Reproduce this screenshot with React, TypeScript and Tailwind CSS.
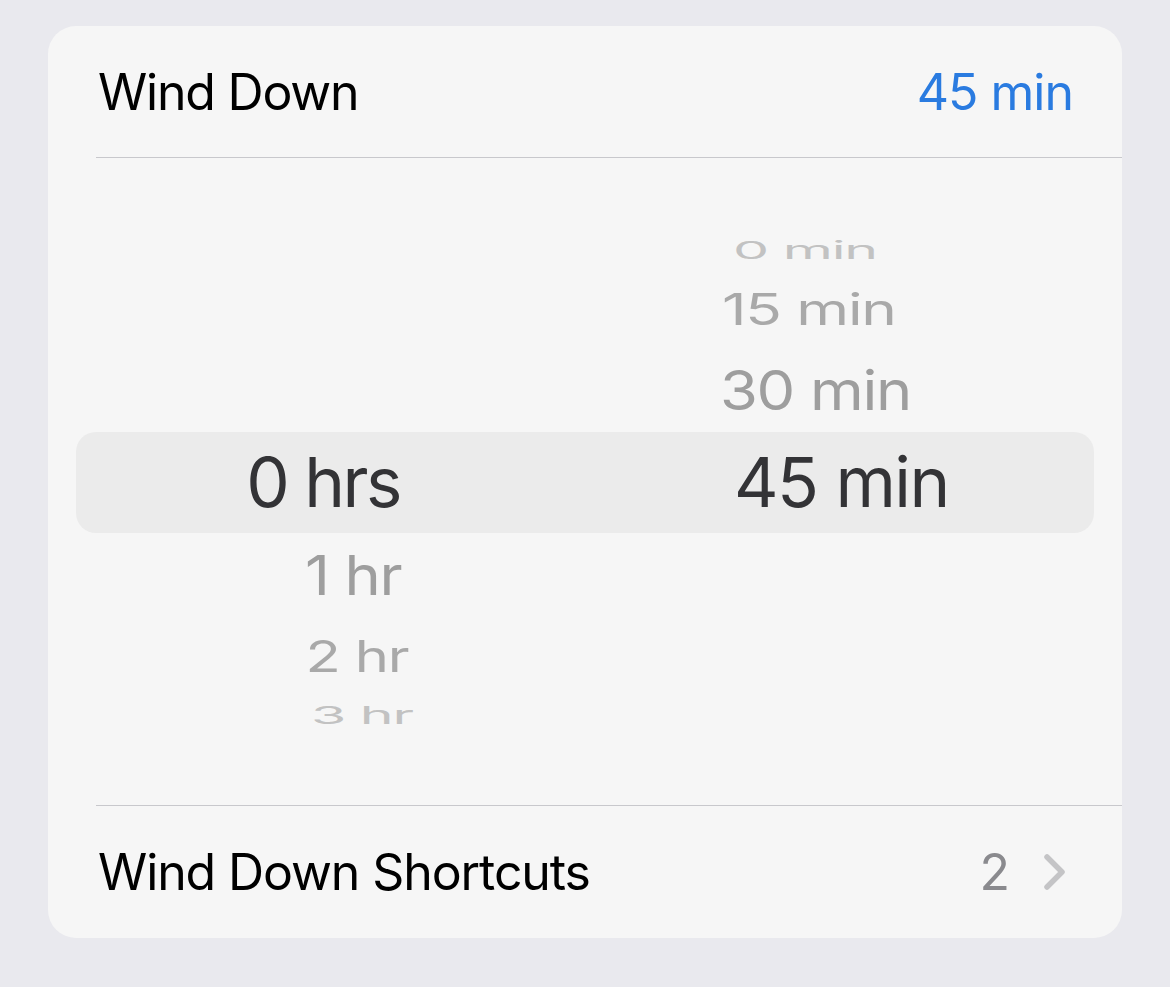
export default function App() {
  return (
    <div className="min-h-screen bg-[#e9e9ee] pt-[26px] px-12 font-['Inter','Liberation_Sans',sans-serif]">
      <div className="w-[1074px] bg-[#f6f6f6] rounded-[28px] overflow-hidden">

        {/* header row */}
        <div className="h-[131px] flex items-center justify-between pl-[50px] pr-[49px]">
          <span className="text-[50px] tracking-[-1.2px] text-black leading-none">Wind Down</span>
          <span className="text-[50px] tracking-[-1px] text-[#2a7be0] leading-none">45 min</span>
        </div>
        <div className="ml-12 h-px bg-[#c8c8cc]" />

        {/* picker */}
        <div className="h-[647px] flex flex-col pt-[72px] tracking-[-1.5px]">
          <div className="h-[40px] mx-7 flex items-center">
            <div className="w-[324px]" />
            <span className="ml-[333px] text-[69px] leading-none text-[#c2c2c2] origin-left scale-x-[0.83] scale-y-[0.36] whitespace-nowrap">0 min</span>
          </div>
          <div className="h-[78px] mx-7 flex items-center">
            <div className="w-[324px]" />
            <span className="ml-[322px] text-[69px] leading-none text-[#a9a9a9] origin-left scale-x-[0.875] scale-y-[0.64] whitespace-nowrap">15 min</span>
          </div>
          <div className="h-[84px] mx-7 flex items-center">
            <div className="w-[324px]" />
            <span className="ml-[320px] text-[69px] leading-none text-[#9e9e9e] origin-left scale-x-[0.89] scale-y-[0.8] whitespace-nowrap">30 min</span>
          </div>

          <div className="h-[101px] mx-7 flex items-center bg-[#ebebeb] rounded-[20px]">
            <div className="w-[324px] text-right text-[69px] tracking-[-2.5px] leading-none text-[#333336] whitespace-nowrap">0 hrs</div>
            <span className="ml-[334px] text-[69px] leading-none text-[#333336] whitespace-nowrap">45 min</span>
          </div>

          <div className="h-[84px] mx-7 flex items-center">
            <div className="w-[325px] flex justify-end">
              <span className="text-[69px] leading-none text-[#9e9e9e] origin-right scale-x-[0.89] scale-y-[0.8] whitespace-nowrap">1 hr</span>
            </div>
          </div>
          <div className="h-[78px] mx-7 flex items-center">
            <div className="w-[332px] flex justify-end">
              <span className="text-[69px] leading-none text-[#a9a9a9] origin-right scale-x-[0.84] scale-y-[0.64] whitespace-nowrap">2 hr</span>
            </div>
          </div>
          <div className="h-[40px] mx-7 flex items-center">
            <div className="w-[337px] flex justify-end">
              <span className="text-[69px] leading-none text-[#c2c2c2] origin-right scale-x-[0.83] scale-y-[0.36] whitespace-nowrap">3 hr</span>
            </div>
          </div>
        </div>

        <div className="ml-12 h-px bg-[#c8c8cc]" />

        {/* shortcuts row */}
        <div className="h-[132px] flex items-center justify-between pl-[50px] pr-[55px]">
          <span className="text-[50px] tracking-[-1.1px] text-black leading-none">Wind Down Shortcuts</span>
          <div className="flex items-center gap-[33px]">
            <span className="text-[50px] text-[#8a8a8e] leading-none">2</span>
            <svg width="24" height="38" viewBox="0 0 24 38" fill="none">
              <polyline points="4,4 19,19 4,34" stroke="#c4c4c6" strokeWidth="5.5" strokeLinecap="round" strokeLinejoin="round" />
            </svg>
          </div>
        </div>
      </div>
    </div>
  )
}
